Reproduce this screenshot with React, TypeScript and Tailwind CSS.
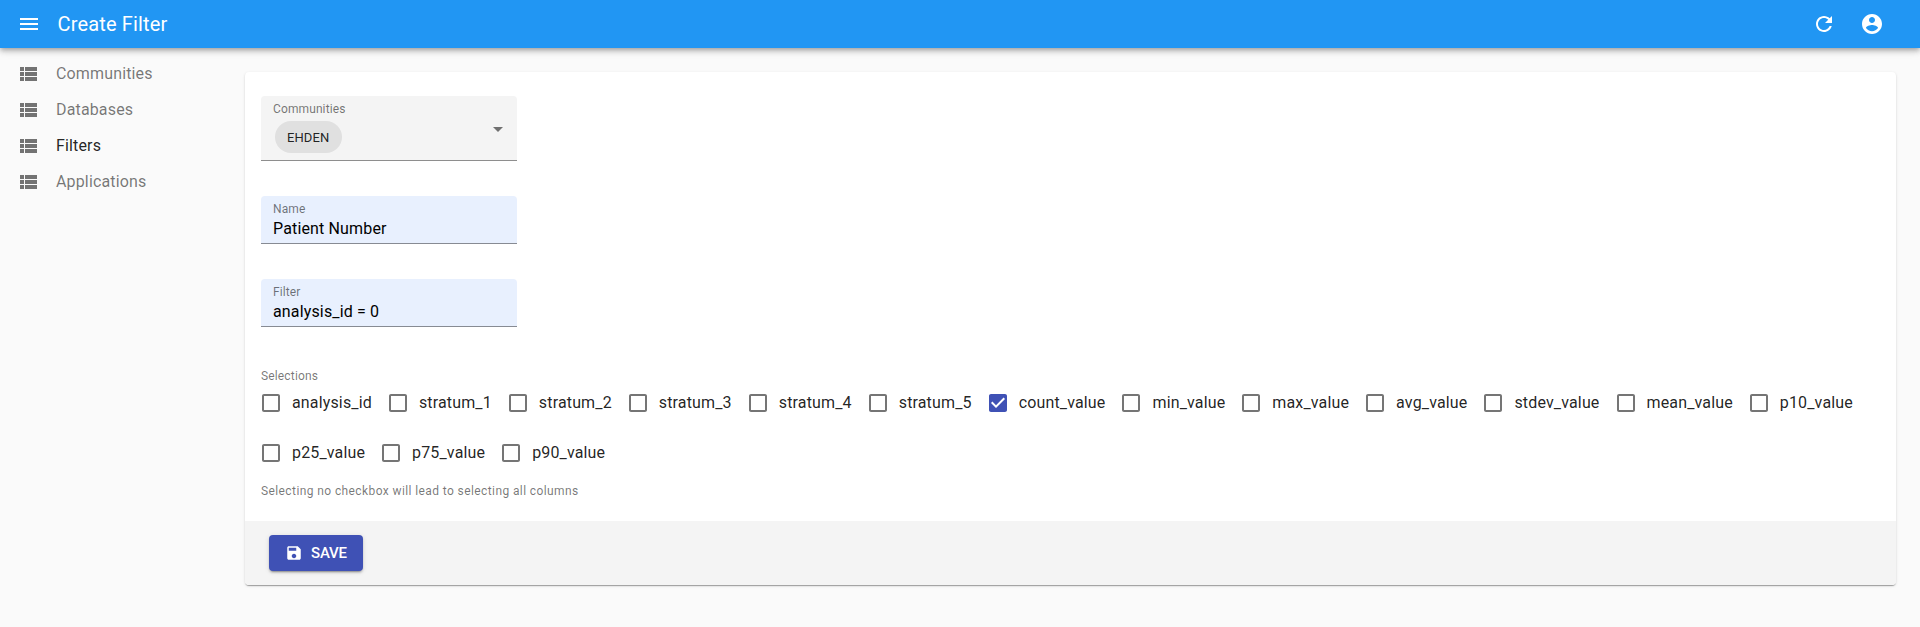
import React from 'react';

const paths = {
  menu: 'M3 18h18v-2H3v2zm0-5h18v-2H3v2zm0-7v2h18V6H3z',
  refresh: 'M17.65 6.35C16.2 4.9 14.21 4 12 4c-4.42 0-7.99 3.58-7.99 8s3.57 8 7.99 8c3.73 0 6.84-2.55 7.73-6h-2.08c-.82 2.33-3.04 4-5.65 4-3.31 0-6-2.69-6-6s2.69-6 6-6c1.66 0 3.14.69 4.22 1.78L13 11h7V4l-2.35 2.35z',
  account: 'M12 2C6.48 2 2 6.48 2 12s4.48 10 10 10 10-4.48 10-10S17.52 2 12 2zm0 3c1.66 0 3 1.34 3 3s-1.34 3-3 3-3-1.34-3-3 1.34-3 3-3zm0 14.2c-2.5 0-4.71-1.28-6-3.22.03-1.99 4-3.08 6-3.08 1.99 0 5.97 1.09 6 3.08-1.29 1.94-3.5 3.22-6 3.22z',
  list: 'M4 14h4v-4H4v4zm0 5h4v-4H4v4zM4 9h4V5H4v4zm5 5h12v-4H9v4zm0 5h12v-4H9v4zM9 5v4h12V5H9z',
  arrow: 'M7 10l5 5 5-5z',
  blank: 'M19 5v14H5V5h14m0-2H5c-1.1 0-2 .9-2 2v14c0 1.1.9 2 2 2h14c1.1 0 2-.9 2-2V5c0-1.1-.9-2-2-2z',
  checked: 'M19 3H5c-1.11 0-2 .9-2 2v14c0 1.1.89 2 2 2h14c1.11 0 2-.9 2-2V5c0-1.1-.89-2-2-2zm-9 14l-5-5 1.41-1.41L10 14.17l7.59-7.59L19 8l-9 9z',
  save: 'M17 3H5c-1.11 0-2 .9-2 2v14c0 1.1.89 2 2 2h14c1.1 0 2-.9 2-2V7l-4-4zm-5 16c-1.66 0-3-1.34-3-3s1.34-3 3-3 3 1.34 3 3-1.34 3-3 3zm3-10H5V5h10v4z',
};

function Icon({ name, className = 'size-6' }: { name: keyof typeof paths; className?: string }) {
  return (
    <svg viewBox="0 0 24 24" fill="currentColor" className={`shrink-0 ${className}`}>
      <path d={paths[name]} />
    </svg>
  );
}

const nav = ['Communities', 'Databases', 'Filters', 'Applications'];
const columns = [
  'analysis_id', 'stratum_1', 'stratum_2', 'stratum_3', 'stratum_4', 'stratum_5', 'count_value', 'min_value',
  'max_value', 'avg_value', 'stdev_value', 'mean_value', 'p10_value', 'p25_value', 'p75_value', 'p90_value',
];

function Field({ label, value }: { label: string; value: string }) {
  return (
    <div className="h-12 w-64 rounded-t border-b border-black/42 bg-[#e8f0fe] px-3 pt-[7px]">
      <div className="text-xs leading-3 tracking-[0.113px] text-black/54">{label}</div>
      <div className="mt-1 text-base leading-[19px] tracking-[0.15px] text-black">{value}</div>
    </div>
  );
}

export default function App() {
  return (
    <div className="flex min-h-[627px] flex-col bg-[#fafafa] font-[Roboto,sans-serif] text-black/87">
      <header className="z-10 flex h-12 items-center bg-[#2196f3] pr-9 pl-[17px] text-white shadow-[0px_2px_4px_-1px_rgba(0,0,0,0.2),0px_4px_5px_0px_rgba(0,0,0,0.14),0px_1px_10px_0px_rgba(0,0,0,0.12)]">
        <Icon name="menu" />
        <h1 className="ml-[16.5px] flex-1 text-xl font-normal leading-8 tracking-[0.15px]">Create Filter</h1>
        <Icon name="refresh" />
        <Icon name="account" className="ml-6 size-6" />
      </header>
      <div className="flex flex-1">
        <nav className="w-[245px] shrink-0 pt-2">
          {nav.map((item) => (
            <a key={item} className={`flex h-9 items-center pl-4 text-base leading-6 tracking-[0.15px] ${item === 'Filters' ? 'text-black/87' : 'text-black/54'}`}>
              <span className="w-10 text-black/54"><Icon name="list" /></span>
              {item}
            </a>
          ))}
        </nav>
        <main className="flex-1 pt-6 pr-6">
          <div className="overflow-hidden rounded bg-white shadow-[0px_2px_1px_-1px_rgba(0,0,0,0.2),0px_1px_1px_0px_rgba(0,0,0,0.14),0px_1px_3px_0px_rgba(0,0,0,0.12)]">
            <div className="h-[449px] px-4 pt-6">
              <div className="flex h-[65px] w-64 justify-between rounded-t border-b border-black/42 bg-[#f4f4f4] pr-[7px] pl-3">
                <div className="pt-[7px]">
                  <div className="text-xs leading-3 tracking-[0.113px] text-black/54">Communities</div>
                  <div className="mt-1.5 ml-0.5 flex h-8 w-[67px] items-center rounded-full bg-[#e0e0e0] px-3 pt-px text-[13px] tracking-[0.1px]">EHDEN</div>
                </div>
                <Icon name="arrow" className="mt-[21px] size-6 text-black/54" />
              </div>
              <div className="mt-[35px]"><Field label="Name" value="Patient Number" /></div>
              <div className="mt-[35px]"><Field label="Filter" value="analysis_id = 0" /></div>
              <div className="mt-[43px] text-xs leading-3 tracking-[0.15px] text-black/54">Selections</div>
              <div className="flex flex-wrap gap-y-2">
                {columns.map((c) => (
                  <label key={c} className="mr-4 -ml-[11px] flex h-[42px] items-center text-base leading-6 tracking-[0.15px]">
                    <span className={`p-[9px] ${c === 'count_value' ? 'text-[#3f51b5]' : 'text-black/54'}`}>
                      <Icon name={c === 'count_value' ? 'checked' : 'blank'} />
                    </span>
                    {c}
                  </label>
                ))}
              </div>
              <p className="mt-[11px] text-xs leading-3 tracking-[0.4px] text-black/54">Selecting no checkbox will lead to selecting all columns</p>
            </div>
            <div className="flex h-16 items-center bg-[#f4f4f4] px-6">
              <button className="flex h-9 w-[94px] items-center gap-2 rounded bg-[#3f51b5] px-4 text-[15px] font-medium tracking-[-0.2px] text-white shadow-[0px_3px_1px_-2px_rgba(0,0,0,0.2),0px_2px_2px_0px_rgba(0,0,0,0.14),0px_1px_5px_0px_rgba(0,0,0,0.12)]">
                <Icon name="save" className="size-[18px]" />SAVE
              </button>
            </div>
          </div>
        </main>
      </div>
    </div>
  );
}
